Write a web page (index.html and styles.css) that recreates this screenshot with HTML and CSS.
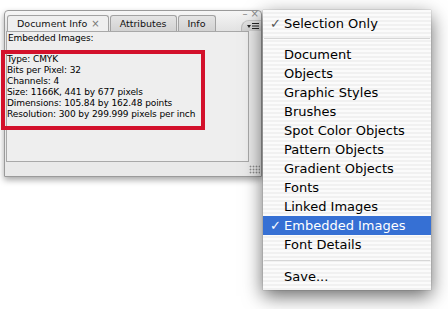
FILE: index.html
```html
<!DOCTYPE html>
<html lang="en">
<head>
    <meta charset="UTF-8">
    <title>Document Info</title>
    <link rel="stylesheet" href="styles.css">
</head>
<body>
<div class="stage">
    <div class="panel">
        <div class="panel-head">
            <div class="tabs">
                <div class="tab active">Document Info <span class="tab-close">×</span></div>
                <div class="tab">Attributes</div>
                <div class="tab">Info</div>
            </div>
            <div class="win-controls">
                <span class="win-min">–</span>
                <span class="win-close">×</span>
            </div>
            <div class="menu-button">
                <svg width="12" height="8" viewBox="0 0 12 8">
                    <path d="M0 3 L4 3 L2 6 Z" fill="#222"/>
                    <rect x="5" y="1" width="7" height="1" fill="#222"/>
                    <rect x="5" y="3.5" width="7" height="1" fill="#222"/>
                    <rect x="5" y="6" width="7" height="1" fill="#222"/>
                </svg>
            </div>
        </div>
        <div class="panel-body">
            <div class="info-line">Embedded Images:</div>
            <div class="highlight-box">
                <div class="info-line">Type: CMYK</div>
                <div class="info-line">Bits per Pixel: 32</div>
                <div class="info-line">Channels: 4</div>
                <div class="info-line">Size: 1166K, 441 by 677 pixels</div>
                <div class="info-line">Dimensions: 105.84 by 162.48 points</div>
                <div class="info-line">Resolution: 300 by 299.999 pixels per inch</div>
            </div>
        </div>
        <div class="panel-foot">
            <span class="grip"></span>
        </div>
    </div>

    <ul class="popup-menu">
        <li class="menu-item checked"><span class="check">✓</span>Selection Only</li>
        <li class="menu-sep"></li>
        <li class="menu-item"><span class="check"></span>Document</li>
        <li class="menu-item"><span class="check"></span>Objects</li>
        <li class="menu-item"><span class="check"></span>Graphic Styles</li>
        <li class="menu-item"><span class="check"></span>Brushes</li>
        <li class="menu-item"><span class="check"></span>Spot Color Objects</li>
        <li class="menu-item"><span class="check"></span>Pattern Objects</li>
        <li class="menu-item"><span class="check"></span>Gradient Objects</li>
        <li class="menu-item"><span class="check"></span>Fonts</li>
        <li class="menu-item"><span class="check"></span>Linked Images</li>
        <li class="menu-item selected"><span class="check">✓</span>Embedded Images</li>
        <li class="menu-item"><span class="check"></span>Font Details</li>
        <li class="menu-sep last"></li>
        <li class="menu-item"><span class="check"></span>Save...</li>
    </ul>
</div>
</body>
</html>
```

FILE: styles.css
```css
body {
    margin: 0;
    background: #ffffff;
    font-family: "DejaVu Sans", Verdana, sans-serif;
    color: #000;
}
.stage {
    position: relative;
    width: 448px;
    height: 309px;
    padding: 10px 0 0 4px;
    box-sizing: border-box;
}

/* panel */
.panel {
    width: 258px;
    height: 167px;
    box-sizing: border-box;
    border: 1px solid #9a9a9a;
    border-radius: 4px 4px 0 0;
    background: linear-gradient(#f6f6f6, #e2e2e2 20px, #e9e9e9 20px);
    box-shadow: 0 3px 6px rgba(0, 0, 0, 0.35);
    display: flex;
    flex-direction: column;
}
.panel-head {
    position: relative;
    height: 20px;
    display: flex;
    align-items: flex-end;
    padding-left: 2px;
}
.tabs {
    display: flex;
    align-items: flex-end;
}
.tab {
    height: 15px;
    line-height: 15px;
    font-size: 9.5px;
    padding: 0 9px 0 9px;
    border: 1px solid #a2a2a2;
    border-bottom: none;
    border-radius: 3px 3px 0 0;
    background: linear-gradient(#e4e4e4, #d2d2d2);
    color: #111;
    margin-right: 1px;
}
.tab.active {
    background: #efefef;
    padding-right: 8px;
}
.tab-close {
    color: #777;
    font-size: 10px;
    margin-left: 1px;
}
.win-controls {
    position: absolute;
    right: 2px;
    top: -3px;
    display: flex;
    gap: 3px;
    font-size: 10px;
    color: #8a8a8a;
}
.menu-button {
    position: absolute;
    right: 0;
    top: 9px;
    width: 20px;
    height: 11px;
    border-radius: 8px 0 0 0;
    border-left: 1px solid #b8b8b8;
    border-top: 1px solid #c8c8c8;
    background: linear-gradient(#e4e4e4, #cfcfcf);
    display: flex;
    align-items: center;
    justify-content: flex-end;
    padding-right: 2px;
    box-sizing: border-box;
}
.panel-body {
    margin: 0 12px 0 1px;
    height: 131px;
    box-sizing: border-box;
    border: 1px solid #a8a8a8;
    background: #eeeeee;
    padding: 1px 0 0 1px;
}
.info-line {
    font-size: 9px;
    line-height: 11px;
    letter-spacing: -0.1px;
    white-space: nowrap;
}
.highlight-box {
    position: relative;
    width: 204px;
    box-sizing: border-box;
    margin: 6px 0 0 -7px;
    border: 4px solid #d3112b;
    padding: 0 0 6px 2px;
}
.panel-foot {
    flex: 1;
    display: flex;
    justify-content: flex-end;
    align-items: flex-end;
    padding: 0 1px 2px 0;
}
.grip {
    width: 11px;
    height: 9px;
    background: radial-gradient(circle, #8c8c8c 0.8px, transparent 1.1px) 0 0 / 3px 3px;
}

/* popup menu */
.popup-menu {
    position: absolute;
    left: 263px;
    top: 10px;
    width: 168px;
    margin: 0;
    padding: 4px 0;
    list-style: none;
    background: repeating-linear-gradient(#fbfbfb 0 2px, #f1f1f1 2px 4px);
    box-shadow: 0 6px 18px rgba(0, 0, 0, 0.6), 0 0 1px rgba(0, 0, 0, 0.4);
    font-size: 13px;
}
.menu-item {
    height: 19px;
    line-height: 19px;
    padding-left: 7px;
    white-space: nowrap;
    display: flex;
}
.check {
    display: inline-block;
    width: 14px;
    color: #555;
}
.menu-item.selected {
    background: #3670d4;
    color: #fff;
}
.menu-item.selected .check {
    color: #fff;
}
.menu-sep {
    height: 12px;
    position: relative;
}
.menu-sep::after {
    content: "";
    position: absolute;
    left: 1px;
    right: 1px;
    top: 5px;
    border-top: 1px solid #d6d6d6;
}
.menu-sep.last {
    height: 13px;
}
.menu-sep.last::after {
    top: 6px;
}
```
